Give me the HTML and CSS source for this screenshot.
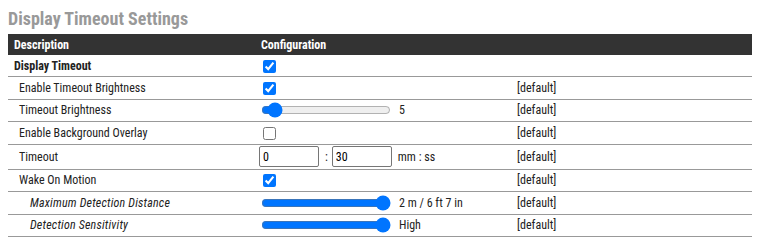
FILE: index.html
```html
<!DOCTYPE html>
<html>
<head>
    <meta charset="utf-8">
    <title>Display Timeout Settings</title>
    <link rel="stylesheet" href="styles.css">
</head>
<body>

    <h2 class="title">Display Timeout Settings</h2>
    <table class="settings">
        <colgroup>
            <col class="c-desc">
            <col class="c-conf">
            <col class="c-def">
        </colgroup>
        <thead>
            <tr>
                <th>Description</th>
                <th>Configuration</th>
                <th></th>
            </tr>
        </thead>
        <tbody>
            <tr class="top">
                <td>Display Timeout</td>
                <td><input type="checkbox" checked></td>
                <td></td>
            </tr>
            <tr>
                <td class="l1">Enable Timeout Brightness</td>
                <td><input type="checkbox" checked></td>
                <td>[default]</td>
            </tr>
            <tr>
                <td class="l1">Timeout Brightness</td>
                <td><div class="ctl"><input type="range" min="0" max="100" value="5"><span>5</span></div></td>
                <td>[default]</td>
            </tr>
            <tr>
                <td class="l1">Enable Background Overlay</td>
                <td><input type="checkbox"></td>
                <td>[default]</td>
            </tr>
            <tr class="tall">
                <td class="l1">Timeout</td>
                <td>
                    <div class="ctl">
                        <input type="text" class="num" value="0">
                        <span class="sep">:</span>
                        <input type="text" class="num" value="30">
                        <span>mm : ss</span>
                    </div>
                </td>
                <td>[default]</td>
            </tr>
            <tr>
                <td class="l1">Wake On Motion</td>
                <td><input type="checkbox" checked></td>
                <td>[default]</td>
            </tr>
            <tr>
                <td class="l2">Maximum Detection Distance</td>
                <td><div class="ctl"><input type="range" min="0" max="100" value="100"><span>2 m / 6 ft 7 in</span></div></td>
                <td>[default]</td>
            </tr>
            <tr>
                <td class="l2">Detection Sensitivity</td>
                <td><div class="ctl"><input type="range" min="0" max="100" value="100"><span>High</span></div></td>
                <td>[default]</td>
            </tr>
        </tbody>
    </table>

</body>
</html>
```

FILE: styles.css
```css
body {
    margin: 8px;
    font-family: "Roboto Condensed", "Liberation Sans Narrow", Roboto, sans-serif;
    font-size: 12px;
    color: #222;
    background: #fff;
}

.title {
    font-size: 18px;
    font-weight: bold;
    color: #999;
    margin: 0 0 5px 0;
    line-height: 21px;
}

.settings {
    width: 744px;
    border-collapse: collapse;
    table-layout: fixed;
}

.c-desc {
    width: 247px;
}

.c-conf {
    width: 256px;
}

.settings th {
    background: #333;
    color: #fff;
    text-align: left;
    font-weight: bold;
    height: 21px;
    padding: 0 6px;
}

.settings td {
    height: 21.5px;
    padding: 0 6px;
    border-bottom: 1px solid #999;
    white-space: nowrap;
}

.settings tr.top td {
    font-weight: bold;
    height: 21px;
}

.settings tr.tall td {
    height: 24px;
}

.settings td.l1 {
    padding-left: 11px;
}

.settings td.l2 {
    padding-left: 22px;
    font-style: italic;
    letter-spacing: 0.2px;
}

input[type="checkbox"] {
    margin: 0 0 0 2px;
    vertical-align: middle;
}

.ctl {
    display: flex;
    align-items: center;
    gap: 6px;
}

input[type="range"] {
    width: 130px;
    margin: 0 2px 0 0;
}

.num {
    width: 60px;
    height: 21px;
    box-sizing: border-box;
    border: 1px solid #767676;
    border-radius: 2px;
    padding: 0 3px;
    font: inherit;
    margin: 0 0 0 -2px;
}

.sep {
    margin: 0;
}
```
